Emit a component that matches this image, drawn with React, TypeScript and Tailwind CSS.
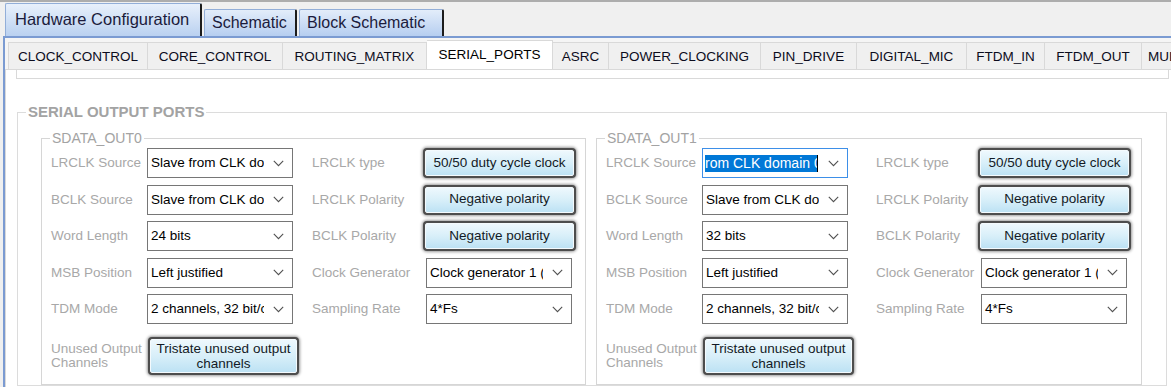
import React from "react";

const Chevron = () => (
  <svg width="11" height="7" viewBox="0 0 11 7" className="shrink-0">
    <path d="M0.8 0.9 L5.5 5.6 L10.2 0.9" fill="none" stroke="#505050" strokeWidth="1.1" />
  </svg>
);

function Select({ text, focused }: { text: string; focused?: boolean }) {
  return (
    <div
      className={`h-[30px] w-[146px] shrink-0 bg-white flex items-center pl-[2px] pr-[8px] border ${
        focused ? "border-[#3d8fe8]" : "border-[#767676]"
      }`}
    >
      {focused ? (
        <div className="w-[115px] h-[17px] flex items-center">
          <div className="w-[113px] h-[17px] overflow-hidden whitespace-nowrap bg-[#0078d7] text-white text-[14px] leading-[17px] border-r border-black">
            {text}
          </div>
        </div>
      ) : (
        <div className="w-[115px] pl-[1px] overflow-hidden whitespace-nowrap text-[13.5px] leading-[16px] text-black">
          {text}
        </div>
      )}
      <div className="ml-[9px] flex items-center">
        <Chevron />
      </div>
    </div>
  );
}

const btnOuter =
  "rounded-[4px] bg-[#4d4d4d] p-[2px] shadow-[0_0_3px_1px_rgba(0,0,0,0.4)]";
const btnInner =
  "h-full w-full rounded-[2px] border border-[#f4fafd] bg-linear-to-b from-[#eef8fd] via-[#d8eff9] to-[#bde2f4] flex items-center justify-center text-center text-[#131a26]";

function Toggle({ text }: { text: string }) {
  return (
    <div className={`h-[30px] w-[153px] shrink-0 -ml-[3px] ${btnOuter}`}>
      <div className={`${btnInner} text-[13.5px] whitespace-nowrap`}>{text}</div>
    </div>
  );
}

type Row = { l1: string; c1: React.ReactNode; l2: string; c2: React.ReactNode };

function PortBox({
  title,
  rows,
  gap2,
  label2W,
  widthCls,
}: {
  title: string;
  rows: Row[];
  gap2: string;
  label2W: string;
  widthCls: string;
}) {
  return (
    <fieldset className={`${widthCls} shrink-0 border border-[#d6d6d6]`}>
      <legend className="ml-[8px] px-[2px] text-[14px] leading-[16px] text-[#a3a3a3]">{title}</legend>
      <div className="mt-[2px] pl-[9px] pb-[9px] flex flex-col gap-[6.5px]">
        {rows.map((r, i) => (
          <div key={i} className="flex items-center h-[30px]">
            <div className="w-[96px] shrink-0 text-[13.5px] leading-[16px] text-[#a8a8a8] whitespace-nowrap">{r.l1}</div>
            {r.c1}
            <div className={`${gap2} shrink-0`} />
            <div className={`${label2W} shrink-0 text-[13.5px] leading-[16px] text-[#a8a8a8] whitespace-nowrap`}>{r.l2}</div>
            {r.c2}
          </div>
        ))}
        <div className="flex items-center mt-[6.5px] h-[38px]">
          <div className="w-[96px] shrink-0 text-[13.5px] leading-[14px] text-[#a8a8a8] whitespace-nowrap">
            Unused Output
            <br />
            Channels
          </div>
          <div className={`ml-[1px] h-[38px] w-[151px] ${btnOuter}`}>
            <div className={`${btnInner} text-[13.5px] leading-[15px]`}>
              Tristate unused output
              <br />
              channels
            </div>
          </div>
        </div>
      </div>
    </fieldset>
  );
}

const innerTabs: [string, string][] = [
  ["CLOCK_CONTROL", "w-[140px]"],
  ["CORE_CONTROL", "w-[135px]"],
  ["ROUTING_MATRIX", "w-[144px]"],
  ["SERIAL_PORTS", "w-[126px]"],
  ["ASRC", "w-[56px]"],
  ["POWER_CLOCKING", "w-[152px]"],
  ["PIN_DRIVE", "w-[96px]"],
  ["DIGITAL_MIC", "w-[110px]"],
  ["FTDM_IN", "w-[78px]"],
  ["FTDM_OUT", "w-[97px]"],
];

export default function App() {
  const rows0: Row[] = [
    { l1: "LRCLK Source", c1: <Select text="Slave from CLK domain 0" />, l2: "LRCLK type", c2: <Toggle text="50/50 duty cycle clock" /> },
    { l1: "BCLK Source", c1: <Select text="Slave from CLK domain 0" />, l2: "LRCLK Polarity", c2: <Toggle text="Negative polarity" /> },
    { l1: "Word Length", c1: <Select text="24 bits" />, l2: "BCLK Polarity", c2: <Toggle text="Negative polarity" /> },
    { l1: "MSB Position", c1: <Select text="Left justified" />, l2: "Clock Generator", c2: <Select text="Clock generator 1 (CLK domain 0)" /> },
    { l1: "TDM Mode", c1: <Select text="2 channels, 32 bit/ch" />, l2: "Sampling Rate", c2: <Select text="4*Fs" /> },
  ];
  const rows1: Row[] = [
    { l1: "LRCLK Source", c1: <Select text="rom CLK domain 0" focused />, l2: "LRCLK type", c2: <Toggle text="50/50 duty cycle clock" /> },
    { l1: "BCLK Source", c1: <Select text="Slave from CLK domain 0" />, l2: "LRCLK Polarity", c2: <Toggle text="Negative polarity" /> },
    { l1: "Word Length", c1: <Select text="32 bits" />, l2: "BCLK Polarity", c2: <Toggle text="Negative polarity" /> },
    { l1: "MSB Position", c1: <Select text="Left justified" />, l2: "Clock Generator", c2: <Select text="Clock generator 1 (CLK domain 0)" /> },
    { l1: "TDM Mode", c1: <Select text="2 channels, 32 bit/ch" />, l2: "Sampling Rate", c2: <Select text="4*Fs" /> },
  ];

  return (
    <div className="w-[1171px] h-[387px] overflow-hidden bg-[#f0f0f0] font-['Liberation_Sans',Arial,sans-serif] flex flex-col">
      {/* top tab bar */}
      <div className="h-[36px] shrink-0 border-t-2 border-[#adadad] flex items-end pl-[5px] gap-[2px]">
        <div className="h-[33px] w-[197px] rounded-t-[2px] border-t border-l border-[#92aed8] border-r-2 border-r-[#1c1c1c] bg-linear-to-b from-[#e8f0fb] to-[#bad1f0] flex items-center pl-[9px] pb-[2px] text-[16.5px] text-[#1b1b3c] whitespace-nowrap">
          Hardware Configuration
        </div>
        <div className="h-[27px] w-[93px] rounded-t-[2px] border-t border-l border-[#92aed8] border-r-2 border-r-[#1c1c1c] bg-linear-to-b from-[#e3edfa] to-[#b6cef0] flex items-center pl-[7px] text-[16px] text-[#1b1b3c] whitespace-nowrap">
          Schematic
        </div>
        <div className="h-[27px] w-[145px] rounded-t-[2px] border-t border-l border-[#92aed8] border-r-2 border-r-[#1c1c1c] bg-linear-to-b from-[#e3edfa] to-[#b6cef0] flex items-center pl-[7px] text-[16px] text-[#1b1b3c] whitespace-nowrap">
          Block Schematic
        </div>
      </div>

      {/* panel */}
      <div className="flex-1 ml-[3px] border-l-2 border-t-2 border-[#7b9bd2] bg-[#f5f5f5] flex flex-col min-h-0">
        <div className="h-[31px] shrink-0 flex items-end pl-[3px] overflow-hidden">
          {innerTabs.map(([t, w], i) =>
            t === "SERIAL_PORTS" ? (
              <div
                key={t}
                className={`${w} shrink-0 relative z-10 -mb-px h-[30px] bg-white border-t border-r border-[#d9d9d9] flex items-center justify-center text-[13.5px] text-black whitespace-nowrap`}
              >
                {t}
              </div>
            ) : (
              <div
                key={t}
                className={`${w} shrink-0 h-[27px] bg-[#f0f0f0] border-t border-r ${i === 0 ? "border-l" : ""} border-[#d9d9d9] flex items-center justify-center pt-[3px] text-[13.5px] text-[#0c0c1c] whitespace-nowrap`}
              >
                {t}
              </div>
            )
          )}
          <div className="w-[140px] shrink-0 h-[27px] bg-[#f0f0f0] border-t border-[#d9d9d9] flex items-center pl-[6px] pt-[3px] text-[13.5px] text-[#0c0c1c] whitespace-nowrap">
            MULTIPURPOSE
          </div>
        </div>

        <div className="flex-1 bg-white border-t border-l border-[#d9d9d9] min-h-0">
          <div className="ml-[10px] w-[1153px] h-[9px] border-x border-b border-[#d9d9d9]" />
          <fieldset className="mt-[24px] ml-[11px] w-[1150px] border border-[#dcdcdc]">
            <legend className="ml-[8px] px-[2px] text-[15px] font-bold leading-[18px] text-[#a3a3a3] whitespace-nowrap">
              SERIAL OUTPUT PORTS
            </legend>
            <div className="mt-[9px] px-[23px] flex gap-[10px]">
              <PortBox title="SDATA_OUT0" rows={rows0} gap2="w-[19px]" label2W="w-[114px]" widthCls="w-[545px]" />
              <PortBox title="SDATA_OUT1" rows={rows1} gap2="w-[28px]" label2W="w-[105px]" widthCls="w-[546px]" />
            </div>
          </fieldset>
        </div>
      </div>
    </div>
  );
}
